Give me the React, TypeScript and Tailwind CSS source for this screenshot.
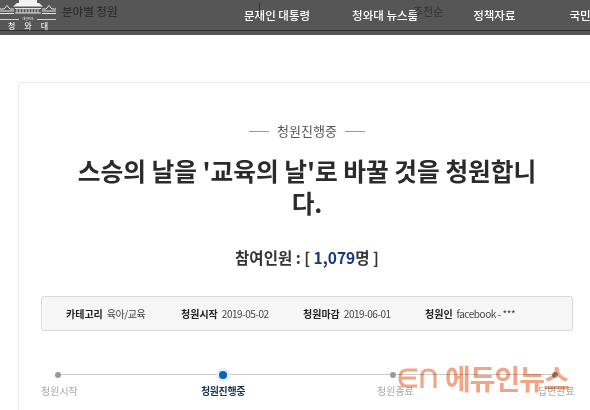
const FONT = "font-['Noto_Sans_CJK_KR','Noto_Sans',sans-serif]";

const Logo = () => (
  <div className="w-[56px] shrink-0 flex flex-col items-center text-[#e8e8e8]">
    <svg width="56" height="16" viewBox="0 0 56 16" fill="none" stroke="#e6e6e6" strokeWidth="1">
      <rect x="19" y="0" width="18" height="3" fill="#f2f2f2" stroke="none" />
      <path d="M17 3 L39 3 L43 6.5 L13 6.5 Z" fill="#f4f4f4" stroke="none" />
      <path d="M15 8.5 H41 M15 13 H41" />
      <path d="M17 9 V13 M20 9 V13 M23 9 V13 M26 9 V13 M29 9 V13 M32 9 V13 M35 9 V13 M38 9 V13" strokeWidth="0.9" />
      <path d="M0 9 L4 9 L7 5.5 L10 9 L14 9 M42 9 L46 9 L49 5.5 L52 9 L56 9" />
      <path d="M0 11 H14 M42 11 H56 M0 13.5 H14 M42 13.5 H56" />
    </svg>
    <div className="w-full flex items-center gap-[3px] mt-px">
      <div className="h-px flex-1 bg-[#cfcfcf]" />
      <span className="text-[3px] leading-[4px]">대한민국</span>
      <div className="h-px flex-1 bg-[#cfcfcf]" />
    </div>
    <div className="w-[40px] flex justify-between text-[8px] leading-[10px] font-medium">
      <span>청</span>
      <span>와</span>
      <span>대</span>
    </div>
  </div>
);

const Nav = () => (
  <header className="relative h-[35px] bg-[#565656] overflow-hidden">
    <div className="h-[30px] flex items-start">
      <Logo />
      <span className="ml-[6px] mt-[3px] w-[55px] whitespace-nowrap text-[11.5px] leading-[16px] font-medium text-[#2f2f2f]">분야별 청원</span>
      <nav className="flex text-[11.5px] leading-[16px] font-medium text-white mt-[7px] ml-[127px] gap-[42px] whitespace-nowrap">
        <span>문재인 대통령</span>
        <span>청와대 뉴스룸</span>
        <span className="ml-[13px]">정책자료</span>
        <span className="ml-[12px]">국민소통</span>
      </nav>
    </div>
    <div className="h-px bg-[#2e2e2e]" />
    <span className="absolute left-[413px] top-[3px] text-[11px] leading-[16px] font-medium text-[#3a3a3a]">추천순</span>
    <div className="absolute left-[259px] top-[3px] h-[14px] w-px bg-[#333]" />
  </header>
);

const Info = ({ label, value, cls }: { label: string; value: string; cls: string }) => (
  <div className={`flex items-center gap-[4px] whitespace-nowrap ${cls}`}>
    <span className="text-[10px] font-bold text-[#222]">{label}</span>
    <span className="text-[10px] text-[#444] tracking-[-0.45px]">{value}</span>
  </div>
);

const Step = ({ label, cls }: { label: string; cls: string }) => (
  <span className={`text-[10px] leading-[14px] whitespace-nowrap ${cls}`}>{label}</span>
);

export default function App() {
  return (
    <div className={`relative w-[590px] h-[410px] overflow-hidden bg-white ${FONT}`}>
      <Nav />
      <main className="mt-[47px] ml-[18px] w-[580px] h-[400px] border border-[#e9e9e9] rounded-[3px] flex flex-col pl-[22px]">
        <div className="mt-[39px] w-[532px] flex items-center justify-center gap-[8px] text-[#555]">
          <div className="w-[20px] h-px bg-[#999]" />
          <span className="text-[13px] leading-[18px]">청원진행중</span>
          <div className="w-[20px] h-px bg-[#999]" />
        </div>
        <h1 className="mt-[14px] w-[532px] px-[30px] text-center text-[24.7px] leading-[32px] font-bold text-[#2b2b2b]">
          스승의 날을 '교육의 날'로 바꿀 것을 청원합니다.
        </h1>
        <p className="mt-[28px] w-[532px] text-center text-[15.5px] leading-[22px] font-bold text-[#333]">
          참여인원 : [ <span className="text-[#15397f]">1,079</span>명 ]
        </p>
        <div className="mt-[28px] w-[532px] h-[35px] flex items-center bg-[#f6f6f6] border border-[#d9d9d9] rounded-[3px]">
          <Info label="카테고리" value="육아/교육" cls="ml-[24px] w-[115px]" />
          <Info label="청원시작" value="2019-05-02" cls="w-[122px]" />
          <Info label="청원마감" value="2019-06-01" cls="w-[122px]" />
          <Info label="청원인" value="facebook - ***" cls="" />
        </div>
        <div className="relative mt-[40px] w-[532px] h-[40px]">
          <div className="absolute left-[17px] w-[497px] top-[3px] h-px bg-[#cccccc]" />
          <div className="absolute left-[14px] top-px w-[6px] h-[6px] rounded-full bg-[#999]" />
          <div className="absolute left-[175px] top-[-3px] w-[14px] h-[14px] rounded-full bg-[#e2eefa]" />
          <div className="absolute left-[178px] top-0 w-[8px] h-[8px] rounded-full bg-[#0b63b8]" />
          <div className="absolute left-[349px] top-px w-[6px] h-[6px] rounded-full bg-[#999]" />
          <div className="absolute left-[511px] top-px w-[6px] h-[6px] rounded-full bg-[#999]" />
          <div className="absolute left-0 top-[13px] flex items-center">
            <Step label="청원시작" cls="w-[37px] text-[#aaa]" />
            <Step label="청원진행중" cls="ml-[123px] w-[44px] font-bold tracking-[-0.4px] text-[#15335e]" />
            <Step label="청원종료" cls="ml-[132px] w-[35px] text-[#aaa]" />
            <Step label="답변완료" cls="ml-[126px] text-[#aaa]" />
          </div>
        </div>
      </main>
      <div className="absolute left-[398px] top-[362px] flex items-center gap-[7px] text-[#f2a585] mix-blend-multiply">
        <svg width="40" height="22" viewBox="0 0 40 22" fill="none" stroke="currentColor" strokeWidth="3.2">
          <path d="M19 3 H9 Q2 3 2 11 Q2 19 9 19 H19 M3 11 H18" />
          <path d="M24 21 V9 Q24 3 30 3 Q37 3 37 9 V21" />
        </svg>
        <span className="text-[28px] leading-[32px] font-bold tracking-[-1px]">에듀인뉴스</span>
      </div>
    </div>
  );
}
